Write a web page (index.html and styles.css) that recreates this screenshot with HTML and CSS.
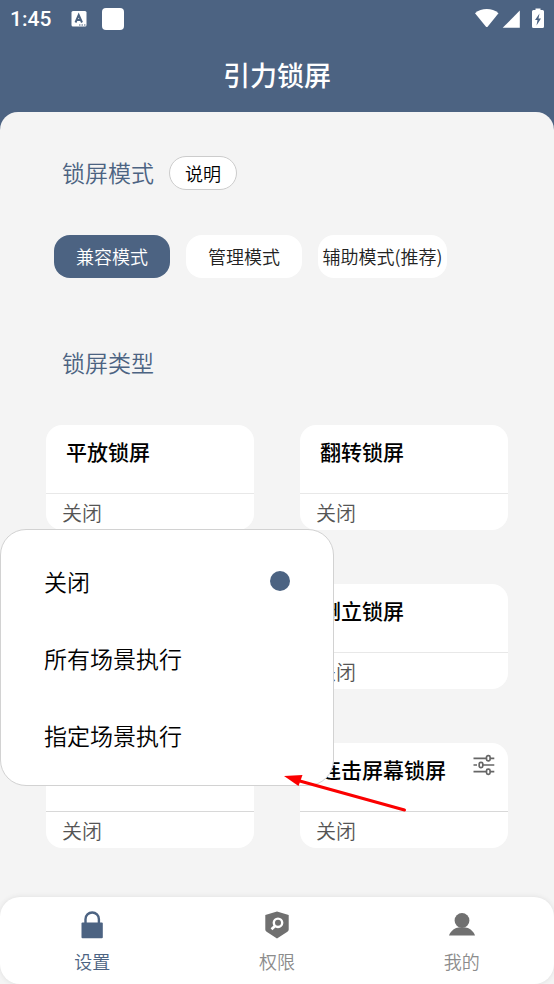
FILE: index.html
```html
<!DOCTYPE html>
<html lang="zh-CN">
<head>
<meta charset="utf-8">
<meta name="viewport" content="width=device-width, initial-scale=1">
<title>引力锁屏</title>
<link rel="stylesheet" href="styles.css">
</head>
<body>
<div class="app">
  <header class="header">
    <div class="status">
      <span class="time">1:45</span>
      <svg class="keyboard" width="16" height="16" viewBox="0 0 16 16" aria-hidden="true">
        <rect x="0.5" y="0" width="15" height="15.500" rx="1.500" fill="#fff"/>
        <path d="M4.500 11.500 7.700 4l3.300 7.500M5.700 9h4" fill="none" stroke="#4b6280" stroke-width="2"/>
        <path d="M8 14h1.500M10.500 14H12M13 14h1.500" stroke="#4b6280" stroke-width="1.200"/>
      </svg>
      <span class="notice"></span>
      <svg class="signals" width="70" height="22" viewBox="0 0 70 22" aria-hidden="true">
        <g fill="#fff">
          <path d="M0 5.200C6.500-.4 17-.4 23.500 5.200L12.600 18.700q-.8.8-1.600 0Z"/>
          <path d="M44.800 2.500v17.300H27.700Z"/>
          <path fill-rule="evenodd" d="M60.500.5h5V2h2q1.500 0 1.500 1.500v15q0 1.500-1.500 1.500h-9Q57 20 57 18.500v-15Q57 2 58.500 2h2ZM64.500 5.500 60 12h2.500l-1 5.500L66 10.500h-2.500Z"/>
        </g>
      </svg>
    </div>
    <h1 class="app-title">引力锁屏</h1>
  </header>

  <main class="main">
    <section>
      <div class="section-head">
        <h2 class="section-title">锁屏模式</h2>
        <button class="help" type="button">说明</button>
      </div>
      <div class="modes">
        <button class="mode mode-active" type="button">兼容模式</button>
        <button class="mode" type="button">管理模式</button>
        <button class="mode mode-wide" type="button">辅助模式(推荐)</button>
      </div>
    </section>

    <section class="types">
      <h2 class="section-title">锁屏类型</h2>
      <div class="cards">
        <article class="card">
          <h3 class="card-title">平放锁屏</h3>
          <button class="card-state" type="button">关闭</button>
        </article>
        <article class="card">
          <h3 class="card-title">翻转锁屏</h3>
          <button class="card-state" type="button">关闭</button>
        </article>
        <article class="card">
          <div class="card-title"></div>
          <div class="card-state"></div>
          <div class="menu">
            <label class="option">关闭<input type="radio" name="scene" checked></label>
            <label class="option">所有场景执行<input type="radio" name="scene"></label>
            <label class="option">指定场景执行<input type="radio" name="scene"></label>
            <svg class="arrow" width="124" height="38" viewBox="0 0 124 38" aria-hidden="true">
              <path d="M14 4.500 120.500 34" stroke="#fb0000" stroke-width="3" stroke-linecap="round"/>
              <path d="M0 0 18.500-1 14.500 10Z" fill="#fb0000"/>
            </svg>
          </div>
        </article>
        <article class="card">
          <h3 class="card-title">倒立锁屏</h3>
          <button class="card-state" type="button">关闭</button>
        </article>
        <article class="card">
          <div class="card-title"></div>
          <button class="card-state card-state-strong" type="button">关闭</button>
        </article>
        <article class="card">
          <h3 class="card-title">连击屏幕锁屏
            <svg class="tune" width="22" height="22" viewBox="0 0 22 22" fill="none" stroke="#666" stroke-width="1.700" aria-hidden="true">
              <path d="M.5 4.300h12.700M17.300 4.300h4M.5 11h3.500M8.500 11h12.800M.5 17.700h12.700M17.300 17.700h4"/>
              <rect x="13.500" y="1.700" width="3.600" height="5.200" rx="1.600"/>
              <rect x="6.200" y="8.400" width="3.600" height="5.200" rx="1.600" fill="#fff"/>
              <rect x="13.500" y="15.100" width="3.600" height="5.200" rx="1.600"/>
            </svg>
          </h3>
          <button class="card-state card-state-strong" type="button">关闭</button>
        </article>
      </div>
    </section>
  </main>

  <nav class="tabs">
    <a class="tab tab-active" href="#settings">
      <svg width="28" height="28" viewBox="0 0 28 28" aria-hidden="true">
        <path d="M7.500 13V8.200a6.700 6.700 0 0 1 13.400 0V13" fill="none" stroke="currentColor" stroke-width="2.400"/>
        <rect x="3.500" y="11.500" width="21.300" height="15.800" rx="1" fill="currentColor"/>
      </svg>
      设置
    </a>
    <a class="tab" href="#permissions">
      <svg width="28" height="28" viewBox="0 0 28 28" aria-hidden="true">
        <path d="M14 .5 25.700 4v14.500Q25.700 20 24.400 20.800L14 27.500 3.600 20.800Q2.300 20 2.300 18.500V4Z" fill="#707070"/>
        <circle cx="15" cy="11.800" r="4.200" fill="none" stroke="#fff" stroke-width="2.400"/>
        <path d="M12 15 8.500 18.300" stroke="#fff" stroke-width="2.600"/>
      </svg>
      权限
    </a>
    <a class="tab" href="#mine">
      <svg width="28" height="28" viewBox="0 0 28 28" aria-hidden="true">
        <circle cx="14" cy="9.500" r="7.400" fill="#707070"/>
        <path d="M1 24.500C3 19 7.500 16.800 10.500 16.500h7c3 .3 7.500 2.500 9.500 8Z" fill="#707070"/>
      </svg>
      我的
    </a>
  </nav>
</div>
</body>
</html>
```
FILE: styles.css
```css
* {
  box-sizing: border-box;
}

body {
  margin: 0;
  background: #4c6382;
  color: #000;
  font-family: "Noto Sans CJK SC", sans-serif;
  font-weight: 350;
}

button {
  border: 0;
  font: inherit;
  color: inherit;
  cursor: pointer;
}

h1, h2, h3 {
  margin: 0;
}

.app {
  display: flex;
  flex-direction: column;
  min-height: 100vh;
}

.header {
  color: #fff;
}

.status {
  display: flex;
  align-items: center;
  height: 38px;
  padding: 0 9px 0 10px;
}

.time {
  font: 500 21px/24px Roboto, sans-serif;
}

.keyboard {
  margin-left: 20px;
}

.notice {
  width: 22px;
  height: 22px;
  margin-left: 15px;
  border-radius: 4px;
  background: #fff;
}

.signals {
  margin-left: auto;
}

.app-title {
  padding: 10px 0;
  font-size: 27px;
  font-weight: 500;
  line-height: 54px;
  text-align: center;
}

.main {
  flex: 1;
  padding: 44px 46px 48px;
  border-radius: 18px 18px 0 0;
  background: #f4f4f4;
}

.section-head {
  display: flex;
  align-items: center;
  gap: 15px;
}

.section-title {
  padding: 0 0 2px 16px;
  color: #4c6382;
  font-size: 23px;
  font-weight: 350;
  line-height: 32px;
}

.help {
  width: 68px;
  height: 34px;
  padding: 0;
  border: 1px solid #ccc;
  border-radius: 17px;
  background: #fff;
  font-size: 18px;
}

.modes {
  display: flex;
  gap: 16px;
  margin-top: 45px;
  padding-left: 8px;
}

.mode {
  width: 116px;
  height: 43px;
  padding: 0 0 2px;
  border-radius: 16px;
  background: #fff;
  color: #222;
  font-size: 18px;
  white-space: nowrap;
}

.mode-wide {
  width: 129px;
}

.mode-active {
  background: #4c6382;
  color: #fff;
}

.types {
  margin-top: 68px;
}

.cards {
  display: grid;
  grid-template-columns: 1fr 1fr;
  gap: 54px 46px;
  margin-top: 45px;
}

.card {
  position: relative;
  border-radius: 16px;
  background: #fff;
}

.card-title {
  display: flex;
  justify-content: space-between;
  height: 68px;
  padding: 11px 13px 0 20px;
  font-size: 21px;
  font-weight: 500;
  line-height: 30px;
  white-space: nowrap;
}

.card-state {
  display: block;
  width: 100%;
  height: 37px;
  padding: 1px 16px 0;
  border-top: 1px solid #e8e8e8;
  background: none;
  color: #555;
  font-size: 20px;
  line-height: 36px;
  text-align: left;
}

.card-state-strong {
  border-top-color: #d8d8d8;
}

.tune {
  flex: none;
}

.menu {
  position: absolute;
  z-index: 1;
  top: -55px;
  left: -46px;
  width: 334px;
  padding: 12px 43px;
  border: 1px solid #d2d2d2;
  border-radius: 26px;
  background: #fff;
}

.option {
  display: flex;
  align-items: center;
  justify-content: space-between;
  height: 77px;
  font-size: 23px;
  line-height: 32px;
}

.option input {
  width: 20px;
  height: 20px;
  margin: 0;
  border-radius: 50%;
  appearance: none;
}

.option input:checked {
  background: #4c6382;
}

.arrow {
  position: absolute;
  top: 246px;
  left: 283px;
  overflow: visible;
}

.tabs {
  display: grid;
  grid-template-columns: repeat(3, 1fr);
  height: 87px;
  border-radius: 20px;
  background: #fff;
  box-shadow: 0 0 5px #ddd, 0 0 0 20px #f4f4f4;
  clip-path: inset(-5px 0 0 0);
}

.tab {
  display: flex;
  flex-direction: column;
  align-items: center;
  gap: 8px;
  padding-top: 14px;
  color: #8c8c8c;
  font-size: 18px;
  line-height: 28px;
  text-decoration: none;
}

.tab-active {
  color: #4c6382;
}
```
